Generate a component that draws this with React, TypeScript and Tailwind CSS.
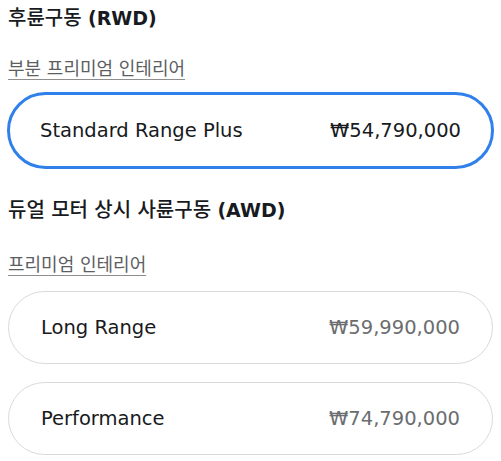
import React from "react";

const font = { fontFamily: '"DejaVu Sans", "Noto Sans CJK KR", sans-serif' };

function Option({ name, price, selected }: { name: string; price: string; selected?: boolean }) {
  return (
    <div
      className={
        "flex items-center justify-between rounded-full bg-white " +
        (selected
          ? "h-[77px] border-[3px] border-[#2f80ea] -mx-[1px] px-[30px]"
          : "h-[73px] border border-[#dadada] px-[32px]")
      }
    >
      <span className="text-[19.5px] text-[#171a20]">{name}</span>
      <span className={"text-[19.5px] " + (selected ? "text-[#171a20]" : "text-[#6b6d70]")}>{price}</span>
    </div>
  );
}

function Heading({ ko, en, className }: { ko: string; en: string; className?: string }) {
  return (
    <h2 className={"text-[20px] leading-[26px] font-medium text-[#171a20] " + (className ?? "")}>
      {ko} <span className="text-[19px] font-semibold">{en}</span>
    </h2>
  );
}

export default function App() {
  return (
    <div className="w-[501px] h-[461px] bg-white overflow-hidden px-[8px] pt-[5px]" style={font}>
      <Heading ko="후륜구동" en="(RWD)" />
      <div className="mt-[26px] text-[18px] leading-[23px] text-[#5c5e62] underline underline-offset-[4px] decoration-[#8e8e8e]">
        부분 프리미엄 인테리어
      </div>
      <div className="mt-[12px]">
        <Option name="Standard Range Plus" price="₩54,790,000" selected />
      </div>
      <Heading className="mt-[28px]" ko="듀얼 모터 상시 사륜구동" en="(AWD)" />
      <div className="mt-[30px] text-[18px] leading-[23px] text-[#5c5e62] underline underline-offset-[4px] decoration-[#8e8e8e]">
        프리미엄 인테리어
      </div>
      <div className="mt-[15px] flex flex-col gap-[18px]">
        <Option name="Long Range" price="₩59,990,000" />
        <Option name="Performance" price="₩74,790,000" />
      </div>
    </div>
  );
}
